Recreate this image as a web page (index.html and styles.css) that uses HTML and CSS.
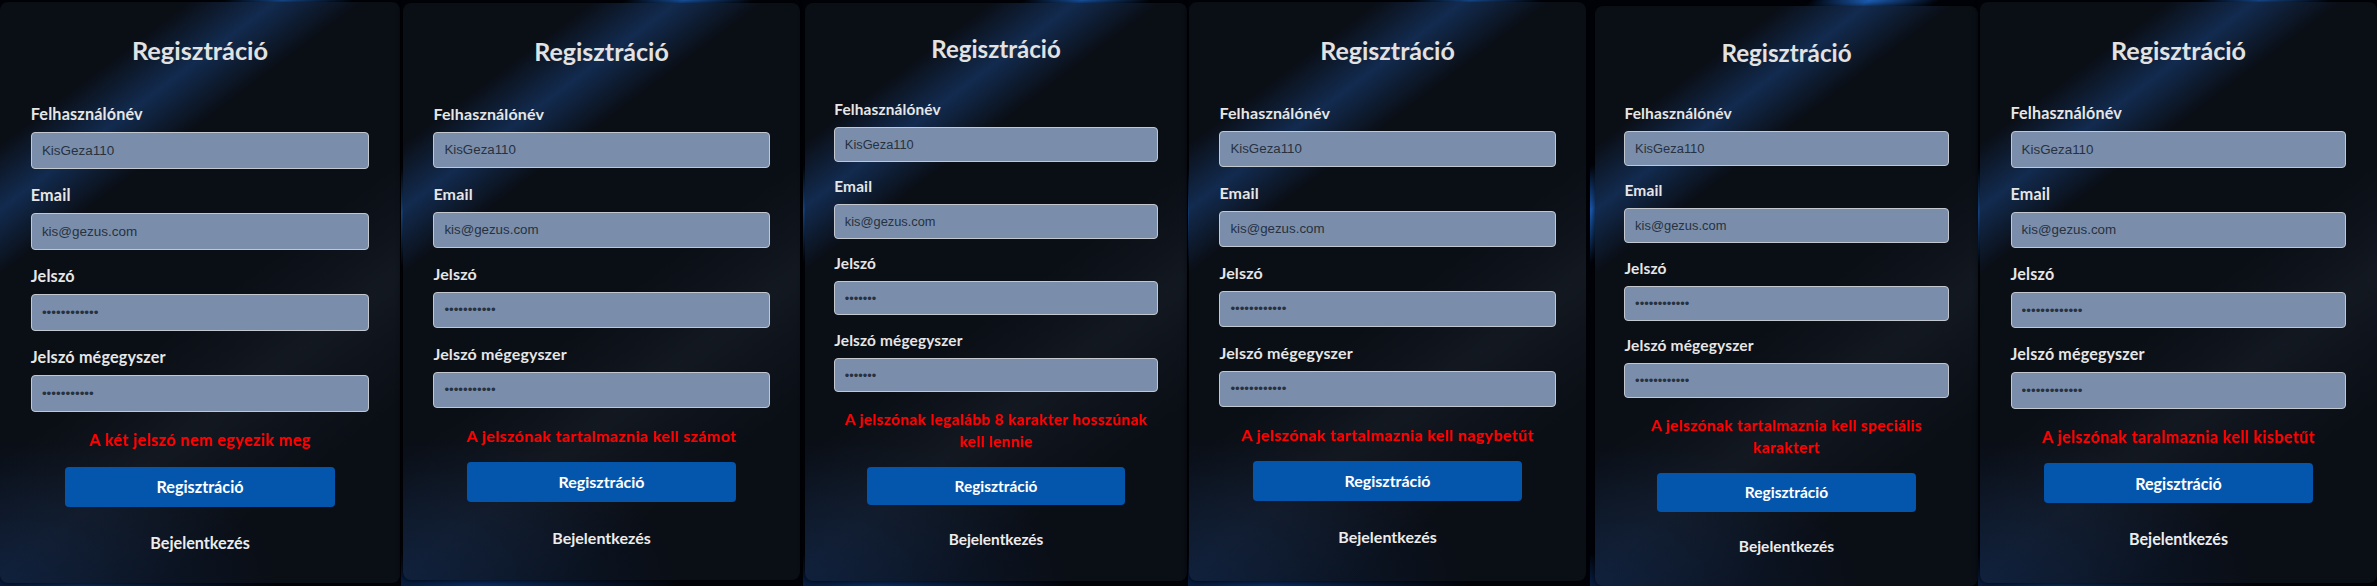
FILE: index.html
```html
<!DOCTYPE html>
<html>
<head>
    <meta charset="utf-8">
    <title>Regisztráció</title>
    <link rel="stylesheet" href="styles.css">
</head>
<body>
    <div class="board">

        <section class="screen screen-1">
            <div class="card">
                <h1 class="card-title">Regisztráció</h1>
                <form class="reg-form">
                    <div class="field"><label>Felhasználónév</label><input type="text" value="KisGeza110"></div>
                    <div class="field"><label>Email</label><input type="email" value="kis@gezus.com"></div>
                    <div class="field"><label>Jelszó</label><input type="password" value="Jelszo12345!"></div>
                    <div class="field"><label>Jelszó mégegyszer</label><input type="password" value="Jelszo1234!"></div>
                    <p class="form-error">A két jelszó nem egyezik meg</p>
                    <button class="btn-primary" type="button">Regisztráció</button>
                </form>
                <a class="login-link">Bejelentkezés</a>
            </div>
        </section>

        <section class="screen screen-2">
            <div class="card">
                <h1 class="card-title">Regisztráció</h1>
                <form class="reg-form">
                    <div class="field"><label>Felhasználónév</label><input type="text" value="KisGeza110"></div>
                    <div class="field"><label>Email</label><input type="email" value="kis@gezus.com"></div>
                    <div class="field"><label>Jelszó</label><input type="password" value="Jelszoabcd!"></div>
                    <div class="field"><label>Jelszó mégegyszer</label><input type="password" value="Jelszoabcd!"></div>
                    <p class="form-error">A jelszónak tartalmaznia kell számot</p>
                    <button class="btn-primary" type="button">Regisztráció</button>
                </form>
                <a class="login-link">Bejelentkezés</a>
            </div>
        </section>

        <section class="screen screen-3">
            <div class="card">
                <h1 class="card-title">Regisztráció</h1>
                <form class="reg-form">
                    <div class="field"><label>Felhasználónév</label><input type="text" value="KisGeza110"></div>
                    <div class="field"><label>Email</label><input type="email" value="kis@gezus.com"></div>
                    <div class="field"><label>Jelszó</label><input type="password" value="Jel12!a"></div>
                    <div class="field"><label>Jelszó mégegyszer</label><input type="password" value="Jel12!a"></div>
                    <p class="form-error">A jelszónak legalább 8 karakter hosszúnak kell lennie</p>
                    <button class="btn-primary" type="button">Regisztráció</button>
                </form>
                <a class="login-link">Bejelentkezés</a>
            </div>
        </section>

        <section class="screen screen-4">
            <div class="card">
                <h1 class="card-title">Regisztráció</h1>
                <form class="reg-form">
                    <div class="field"><label>Felhasználónév</label><input type="text" value="KisGeza110"></div>
                    <div class="field"><label>Email</label><input type="email" value="kis@gezus.com"></div>
                    <div class="field"><label>Jelszó</label><input type="password" value="jelszo12345!"></div>
                    <div class="field"><label>Jelszó mégegyszer</label><input type="password" value="jelszo12345!"></div>
                    <p class="form-error">A jelszónak tartalmaznia kell nagybetűt</p>
                    <button class="btn-primary" type="button">Regisztráció</button>
                </form>
                <a class="login-link">Bejelentkezés</a>
            </div>
        </section>

        <section class="screen screen-5">
            <div class="card">
                <h1 class="card-title">Regisztráció</h1>
                <form class="reg-form">
                    <div class="field"><label>Felhasználónév</label><input type="text" value="KisGeza110"></div>
                    <div class="field"><label>Email</label><input type="email" value="kis@gezus.com"></div>
                    <div class="field"><label>Jelszó</label><input type="password" value="Jelszo123456"></div>
                    <div class="field"><label>Jelszó mégegyszer</label><input type="password" value="Jelszo123456"></div>
                    <p class="form-error">A jelszónak tartalmaznia kell speciális karaktert</p>
                    <button class="btn-primary" type="button">Regisztráció</button>
                </form>
                <a class="login-link">Bejelentkezés</a>
            </div>
        </section>

        <section class="screen screen-6">
            <div class="card">
                <h1 class="card-title">Regisztráció</h1>
                <form class="reg-form">
                    <div class="field"><label>Felhasználónév</label><input type="text" value="KisGeza110"></div>
                    <div class="field"><label>Email</label><input type="email" value="kis@gezus.com"></div>
                    <div class="field"><label>Jelszó</label><input type="password" value="JELSZO12345!!"></div>
                    <div class="field"><label>Jelszó mégegyszer</label><input type="password" value="JELSZO12345!!"></div>
                    <p class="form-error">A jelszónak taralmaznia kell kisbetűt</p>
                    <button class="btn-primary" type="button">Regisztráció</button>
                </form>
                <a class="login-link">Bejelentkezés</a>
            </div>
        </section>

    </div>
</body>
</html>
```

FILE: styles.css
```css
* {
    box-sizing: border-box;
}

body {
    margin: 0;
    background: #000;
    font-family: Lato, "Open Sans", sans-serif;
    overflow: hidden;
}

.board {
    display: flex;
    width: 2377px;
    height: 586px;
    overflow: hidden;
}

/* egy-egy kepernyokep */
.screen {
    flex: none;
    display: flex;
    background:
        radial-gradient(ellipse 50% 6% at 20% 100%, rgba(12, 50, 110, .9), transparent),
        linear-gradient(143deg, #010309 19%, #1c5fb8 24%, #010309 30%);
}

.screen-1 { width: 401px; padding: 2px 1px 3px 0; }
.screen-2 { width: 402px; padding: 3px 3px 6px 2px; }
.screen-3 { width: 385px; padding: 3px 1px 5px 2px; }
.screen-4 { width: 402px; padding: 2px 4px 5px 1px; }
.screen-5 { width: 388px; padding: 6px 0 0 5px; }
.screen-6 { width: 399px; padding: 2px 0 3px 2px; }

.card {
    flex: 1;
    font-size: 16px;
    padding: 2em 1.9em 0;
    border-radius: 8px;
    background:
        radial-gradient(ellipse 70% 25% at 0% 100%, rgba(14, 42, 88, .5), transparent),
        linear-gradient(143deg, transparent 16%, rgba(28, 78, 150, .45) 23.5%, transparent 31%),
        linear-gradient(143deg, transparent 52%, rgba(70, 85, 105, .14) 65%, transparent 80%),
        #0a0e15;
    box-shadow: 0 0 6px rgba(0, 0, 0, .9);
}

.screen-1 .card { font-size: 16.2px; }
.screen-3 .card { font-size: 15.4px; }
.screen-5 .card { font-size: 15.5px; }
.screen-6 .card { font-size: 16.08px; }

.card-title {
    margin: 0;
    font-size: 1.5625em;
    line-height: 1.28;
    font-weight: 700;
    text-align: center;
    color: #e2e2e2;
}

.reg-form {
    margin-top: 2.3em;
}

.field {
    margin-bottom: 1em;
}

.field label {
    display: block;
    line-height: 1.25em;
    margin-bottom: .5em;
    font-weight: 700;
    letter-spacing: .01em;
    color: #e6e6e6;
}

.field input {
    display: block;
    width: 100%;
    height: 2.7em;
    font-size: .833em;
    font-family: "Liberation Sans", Arial, sans-serif;
    padding: 0 .75em;
    border: 1px solid #c3c8cf;
    border-radius: 4px;
    background: #7a8eab;
    color: #27313f;
    outline: none;
}

.form-error {
    margin: 0;
    line-height: 1.4375em;
    font-weight: 700;
    letter-spacing: .025em;
    text-align: center;
    color: #ff0000;
}

.btn-primary {
    display: block;
    width: 80%;
    height: 2.5em;
    margin: .95em auto 0;
    border: 0;
    border-radius: 4px;
    background: #0456ad;
    color: #fff;
    font: inherit;
    font-weight: 700;
}

.login-link {
    display: block;
    margin-top: 1.625em;
    line-height: 1.25em;
    font-weight: 700;
    text-align: center;
    color: #ececec;
}
```
